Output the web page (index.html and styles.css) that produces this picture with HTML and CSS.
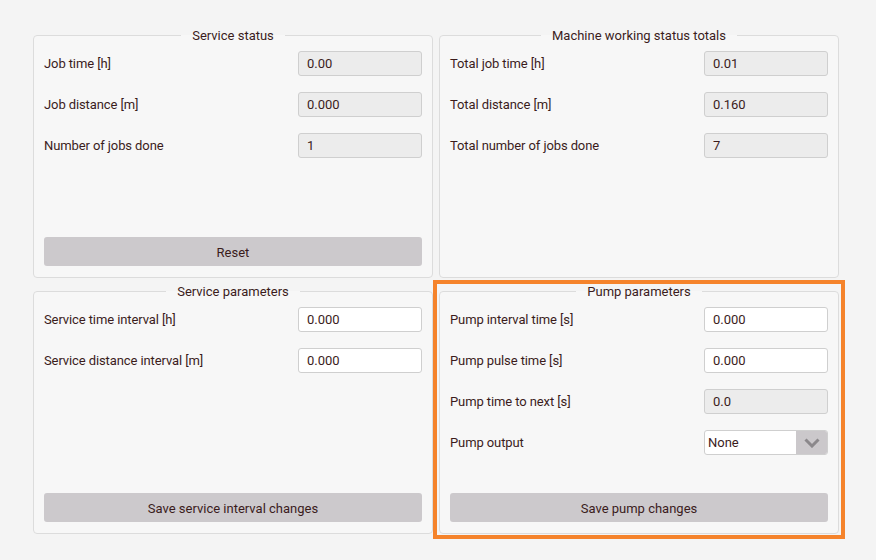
FILE: index.html
```html
<!DOCTYPE html>
<html lang="en">
<head>
    <meta charset="UTF-8">
    <meta name="viewport" content="width=device-width, initial-scale=1.0">
    <title>Service</title>
    <link rel="stylesheet" href="styles.css">
</head>
<body>
    <div class="panels">
        <fieldset class="panel">
            <legend>Service status</legend>
            <div class="panel-body">
                <div class="row">
                    <span class="label">Job time [h]</span>
                    <input class="field readonly" type="text" value="0.00" readonly>
                </div>
                <div class="row">
                    <span class="label">Job distance [m]</span>
                    <input class="field readonly" type="text" value="0.000" readonly>
                </div>
                <div class="row">
                    <span class="label">Number of jobs done</span>
                    <input class="field readonly" type="text" value="1" readonly>
                </div>
                <button class="btn">Reset</button>
            </div>
        </fieldset>

        <fieldset class="panel">
            <legend>Machine working status totals</legend>
            <div class="panel-body">
                <div class="row">
                    <span class="label">Total job time [h]</span>
                    <input class="field readonly" type="text" value="0.01" readonly>
                </div>
                <div class="row">
                    <span class="label">Total distance [m]</span>
                    <input class="field readonly" type="text" value="0.160" readonly>
                </div>
                <div class="row">
                    <span class="label">Total number of jobs done</span>
                    <input class="field readonly" type="text" value="7" readonly>
                </div>
            </div>
        </fieldset>

        <fieldset class="panel">
            <legend>Service parameters</legend>
            <div class="panel-body">
                <div class="row">
                    <span class="label">Service time interval [h]</span>
                    <input class="field" type="text" value="0.000">
                </div>
                <div class="row">
                    <span class="label">Service distance interval [m]</span>
                    <input class="field" type="text" value="0.000">
                </div>
                <button class="btn">Save service interval changes</button>
            </div>
        </fieldset>

        <div class="highlighted">
            <fieldset class="panel">
                <legend>Pump parameters</legend>
                <div class="panel-body">
                    <div class="row">
                        <span class="label">Pump interval time [s]</span>
                        <input class="field" type="text" value="0.000">
                    </div>
                    <div class="row">
                        <span class="label">Pump pulse time [s]</span>
                        <input class="field" type="text" value="0.000">
                    </div>
                    <div class="row">
                        <span class="label">Pump time to next [s]</span>
                        <input class="field readonly" type="text" value="0.0" readonly>
                    </div>
                    <div class="row">
                        <span class="label">Pump output</span>
                        <div class="select">
                            <span class="select-value">None</span>
                            <span class="select-arrow">
                                <svg width="16" height="10" viewBox="0 0 16 10">
                                    <path d="M1.5 1.5 L8 8 L14.5 1.5" fill="none" stroke="#8b888b" stroke-width="3"/>
                                </svg>
                            </span>
                        </div>
                    </div>
                    <button class="btn">Save pump changes</button>
                </div>
            </fieldset>
        </div>
    </div>
</body>
</html>
```

FILE: styles.css
```css
html, body {
    height: 100%;
}

body {
    margin: 0;
    background: #f4f4f4;
    font-family: 'Roboto', 'Liberation Sans', sans-serif;
    font-size: 13px;
    color: #3b1c1c;
}

.panels {
    display: grid;
    grid-template-columns: 400px 400px;
    align-items: start;
    gap: 5px 6px;
    padding: 27px 0 20px 33px;
}

.panel {
    margin: 0;
    padding: 0 10px 11px;
    min-width: 0;
    border: 1px solid #dcdcdc;
    border-radius: 4px;
    background: #f7f7f7;
}

.panel legend {
    margin: 0 auto;
    padding: 1px 11px 0;
    line-height: 15px;
    color: #3b1c1c;
}

/* orange frame around the selected panel, pulled out so the grid stays put */
.highlighted {
    margin: -3px -6px -5px;
    padding: 0 2px 1px;
    border: 4px solid #f5832b;
}

.highlighted .panel {
    margin-top: -1px;
}

.panel-body {
    height: 223px;
    box-sizing: border-box;
    padding-top: 8px;
    display: flex;
    flex-direction: column;
    gap: 16px;
}

.row {
    display: flex;
    justify-content: space-between;
    align-items: center;
    height: 25px;
}

.label {
    letter-spacing: -0.1px;
}

.field {
    width: 124px;
    height: 25px;
    box-sizing: border-box;
    padding: 0 8px;
    border: 1px solid #cfcfcf;
    border-radius: 3px;
    background: #fff;
    font-family: inherit;
    font-size: 13px;
    color: #3b1c1c;
    outline: none;
}

.field.readonly {
    background: #ececec;
}

.select {
    width: 124px;
    height: 25px;
    box-sizing: border-box;
    display: flex;
    border: 1px solid #cfcfcf;
    border-radius: 3px;
    background: #fff;
    overflow: hidden;
}

.select-value {
    flex: 1;
    padding-left: 3px;
    line-height: 23px;
}

.select-arrow {
    width: 31px;
    background: #cbc8cb;
    display: flex;
    align-items: center;
    justify-content: center;
}

.btn {
    margin-top: auto;
    height: 29px;
    padding-top: 2px;
    border: none;
    border-radius: 3px;
    background: #ccc9cc;
    font-family: inherit;
    font-size: 13px;
    color: #3b1c1c;
    cursor: pointer;
}
```
